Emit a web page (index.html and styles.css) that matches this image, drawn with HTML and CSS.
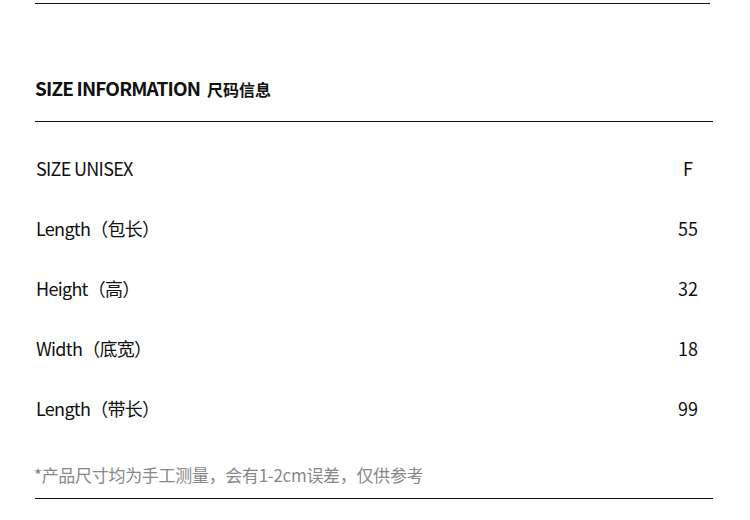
FILE: index.html
```html
<!DOCTYPE html>
<html lang="zh-CN">
<head>
<meta charset="utf-8">
<link rel="stylesheet" href="styles.css">
</head>
<body>
<div class="page">
  <div class="rule rule-top"></div>
  <h2 class="title"><span class="title-en">SIZE INFORMATION</span><span class="title-cn">尺码信息</span></h2>
  <div class="rule rule-mid"></div>
  <div class="table">
    <div class="row"><span class="label">SIZE UNISEX</span><span class="val">F</span></div>
    <div class="row"><span class="label">Length（包长）</span><span class="val">55</span></div>
    <div class="row"><span class="label">Height（高）</span><span class="val">32</span></div>
    <div class="row"><span class="label">Width（底宽）</span><span class="val">18</span></div>
    <div class="row"><span class="label">Length（带长）</span><span class="val">99</span></div>
  </div>
  <p class="note">*产品尺寸均为手工测量，会有1-2cm误差，仅供参考</p>
  <div class="rule rule-bottom"></div>
</div>
</body>
</html>
```
FILE: styles.css
```css
html, body {
  margin: 0;
  padding: 0;
  background: #fff;
}
body {
  font-family: "Noto Sans CJK SC", "Noto Sans", sans-serif;
  color: #111;
}
.page {
  width: 750px;
  height: 520px;
  padding-top: 3px;
  box-sizing: border-box;
}
.rule {
  height: 1px;
  background: #111;
  margin-left: 35px;
}
.rule-top { width: 675px; }
.rule-mid { width: 678px; }
.rule-bottom { width: 678px; }
.title {
  margin: 0;
  height: 117px;
  box-sizing: border-box;
  padding-top: 68px;
  padding-left: 35px;
  font-size: 19px;
  line-height: 32px;
  font-weight: 700;
  letter-spacing: -0.85px;
  display: flex;
  align-items: baseline;
}
.title-cn {
  font-size: 16px;
  margin-left: 7px;
  letter-spacing: 0;
}
.table {
  padding-top: 16px;
}
.row {
  display: flex;
  align-items: center;
  height: 60px;
  padding-left: 36px;
  font-size: 18px;
  letter-spacing: -0.7px;
}
.label {
  flex: 1;
}
.val {
  width: 60px;
  text-align: center;
  margin-right: 32px;
  letter-spacing: 0;
}
.note {
  margin: 21px 0 0;
  padding-left: 34px;
  font-size: 17px;
  color: #888;
  line-height: 32px;
  height: 39px;
  letter-spacing: -0.3px;
}
```
